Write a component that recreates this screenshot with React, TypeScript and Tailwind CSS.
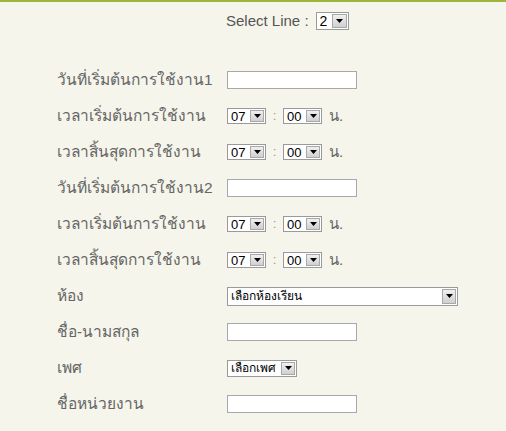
import React from "react";

const font = { fontFamily: '"Liberation Sans", "DejaVu Sans", sans-serif' };

function Arrow({ w = 14 }: { w?: number }) {
  return (
    <div
      className="h-full flex items-center justify-center border border-[#a8a8a8] bg-gradient-to-b from-[#f0f0f0] to-[#cfcfcf] shrink-0"
      style={{ width: w }}
    >
      <svg width="7" height="4" viewBox="0 0 7 4">
        <polygon points="0,0 7,0 3.5,4" fill="#000" />
      </svg>
    </div>
  );
}

function Drop({ text, w, h, textClass = "text-[12px]" }: { text: string; w: number; h: number; textClass?: string }) {
  return (
    <div
      className="flex items-stretch border border-[#9a9a9a] bg-white p-px box-border"
      style={{ width: w, height: h }}
    >
      <div className={`flex-1 flex items-center pl-[2px] text-black leading-none ${textClass}`}>{text}</div>
      <Arrow />
    </div>
  );
}

function TextBox() {
  return <div className="w-[130px] h-[18px] border border-[#a8a8a8] bg-white box-border" />;
}

function Time() {
  return (
    <div className="flex items-center">
      <Drop text="07" w={39} h={16} textClass="text-[13px]" />
      <span className="w-[17px] text-center text-[#999] text-[13px]">:</span>
      <Drop text="00" w={39} h={16} textClass="text-[13px]" />
      <span className="ml-[7px] text-[15px] text-[#666]">น.</span>
    </div>
  );
}

const rows: { label: string; field: React.ReactNode }[] = [
  { label: "วันที่เริ่มต้นการใช้งาน1", field: <TextBox /> },
  { label: "เวลาเริ่มต้นการใช้งาน", field: <Time /> },
  { label: "เวลาสิ้นสุดการใช้งาน", field: <Time /> },
  { label: "วันที่เริ่มต้นการใช้งาน2", field: <TextBox /> },
  { label: "เวลาเริ่มต้นการใช้งาน", field: <Time /> },
  { label: "เวลาสิ้นสุดการใช้งาน", field: <Time /> },
  { label: "ห้อง", field: <Drop text="เลือกห้องเรียน" w={231} h={19} /> },
  { label: "ชื่อ-นามสกุล", field: <TextBox /> },
  { label: "เพศ", field: <Drop text="เลือกเพศ" w={70} h={17} /> },
  { label: "ชื่อหน่วยงาน", field: <TextBox /> },
];

export default function App() {
  return (
    <div className="w-[506px] h-[431px] bg-[#f5f5eb] border-t-2 border-[#9db53a] overflow-hidden" style={font}>
      <div className="h-[38px] flex items-center pl-[226px]">
        <span className="text-[15px] text-[#555]">Select Line :</span>
        <div className="ml-[7px]">
          <div className="flex items-stretch border border-[#9a9a9a] bg-white p-px box-border w-[33px] h-[18px]">
            <div className="flex-1 flex items-center pl-[2px] text-[14px] text-black leading-none">2</div>
            <Arrow w={15} />
          </div>
        </div>
      </div>
      <div className="mt-[22px] pl-[57px] grid grid-cols-[170px_auto] auto-rows-[36px] items-center">
        {rows.map((r, i) => (
          <React.Fragment key={i}>
            <div className="text-[15.5px] text-[#666] whitespace-nowrap">{r.label}</div>
            <div>{r.field}</div>
          </React.Fragment>
        ))}
      </div>
    </div>
  );
}
